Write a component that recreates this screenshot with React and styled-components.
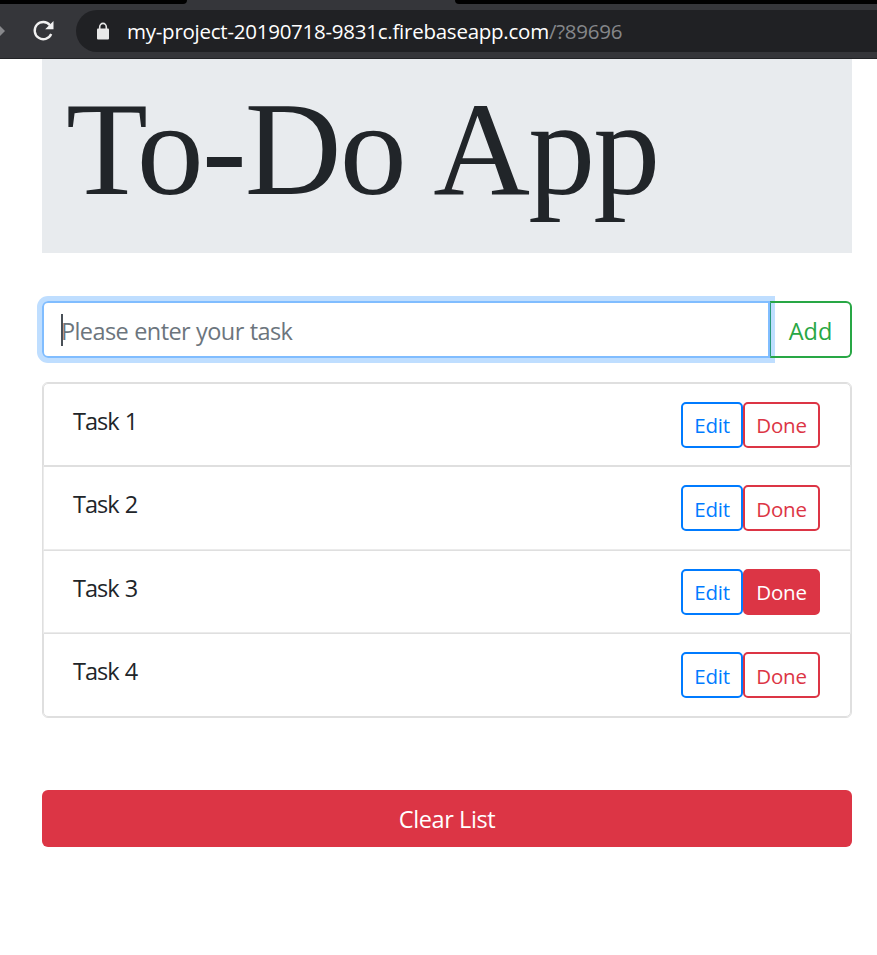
import React from "react";
import styled, { createGlobalStyle, css } from "styled-components";

const Global = createGlobalStyle`
  *, *::before, *::after { box-sizing: border-box; }
  body {
    margin: 0;
    background: #fff;
    color: #212529;
    font-family: "Open Sans", "Noto Sans", sans-serif;
    overflow: hidden;
  }
`;

const Chrome = styled.header`
  height: 59px;
  background: #35363a;
  border-bottom: 1px solid #222326;
  display: flex;
  flex-direction: column;
`;

const TabStrip = styled.div`
  height: 10px;
  flex: none;
  display: flex;
  justify-content: space-between;
`;

const TabGap = styled.div`
  height: 4px;
  width: ${(p) => p.$width}px;
  background: #000;
  border-radius: ${(p) => (p.$side === "left" ? "0 0 6px 0" : "0 0 0 6px")};
`;

const Toolbar = styled.div`
  display: flex;
  align-items: center;
  height: 42px;
`;

const ForwardIcon = styled.svg`
  width: 6px;
  height: 12px;
  flex: none;
`;

const ReloadIcon = styled.svg`
  width: 22px;
  height: 22px;
  margin: 0 21px 0 26px;
  flex: none;
`;

const AddressBar = styled.div`
  flex: 1;
  height: 42px;
  margin-left: 1px;
  padding-left: 20px;
  background: #202124;
  border-radius: 21px 0 0 21px;
  display: flex;
  align-items: center;
`;

const LockIcon = styled.svg`
  width: 14px;
  height: 18px;
  margin-right: 17px;
`;

const Url = styled.span`
  font-size: 20.5px;
  line-height: 28px;
  letter-spacing: -0.25px;
  color: #fff;
  white-space: nowrap;
`;

const UrlPath = styled.span`
  color: #85878a;
`;

const Page = styled.main`
  width: 810px;
  margin-left: 42px;
`;

const Banner = styled.div`
  height: 194px;
  padding: 14px 24px;
  background: #e8ebee;
`;

const Title = styled.h1`
  margin: 0;
  font-family: "Liberation Serif", "Times New Roman", serif;
  font-size: 134px;
  font-weight: 400;
  line-height: 152px;
  letter-spacing: -1.8px;
  word-spacing: 4px;
  white-space: nowrap;
`;

const TaskForm = styled.div`
  margin-top: 48px;
  height: 57px;
  display: flex;
`;

const TaskField = styled.div`
  width: 728px;
  border: 2px solid #80bdff;
  border-radius: 6px 0 0 6px;
  box-shadow: 0 0 0 5px #bfdeff;
  padding-left: 17px;
  display: flex;
  align-items: center;
`;

const Caret = styled.span`
  width: 2px;
  height: 32px;
  margin-right: -2px;
  background: #495057;
`;

const Placeholder = styled.span`
  padding-top: 2px;
  font-size: 23.5px;
  line-height: 32px;
  letter-spacing: -0.6px;
  word-spacing: 0.6px;
  color: #6c757d;
  white-space: nowrap;
`;

const AddButton = styled.button`
  flex: 1;
  padding: 2px 0 0;
  border: 2px solid #28a745;
  border-left: 1px solid #279a7a;
  border-radius: 0 6px 6px 0;
  background: linear-gradient(to right, #bfdeff 4px, #fff 4px);
  color: #28a745;
  font: 400 23.5px/32px "Open Sans", sans-serif;
`;

const TaskList = styled.ul`
  list-style: none;
  margin: 24px 0 0;
  padding: 0;
  height: 336px;
  border: 1px solid #dfdfdf;
  border-radius: 6px;
  display: grid;
  grid-template-rows: 83px 84px 83px 84px;
`;

const TaskRow = styled.li`
  display: flex;
  justify-content: space-between;
  align-items: flex-start;
  padding: 18px 30px 0 29px;
  border: 1px solid #ebebeb;
  border-top-color: #dfdfdf;
  &:first-child, &:last-child { border-color: #dfdfdf; }
  &:first-child { border-radius: 5px 5px 0 0; }
  &:last-child { border-radius: 0 0 5px 5px; }
`;

const TaskName = styled.span`
  font-size: 23.5px;
  line-height: 38px;
  letter-spacing: -1px;
  word-spacing: 1px;
`;

const Actions = styled.div`
  display: flex;
`;

const ActionButton = styled.button`
  width: ${(p) => p.$width}px;
  height: 46px;
  padding: 0;
  border: 2px solid ${(p) => p.$tone};
  border-radius: 5px;
  background: #fff;
  color: ${(p) => p.$tone};
  font: 400 20.5px/30px "Open Sans", sans-serif;
  letter-spacing: -0.2px;
  ${TaskRow}:nth-child(even) & { padding-top: 2px; }
  ${(p) => p.$filled && css`
    background: ${p.$tone};
    color: #fff;
  `}
`;

const ClearButton = styled.button`
  display: block;
  width: 100%;
  height: 57px;
  margin-top: 72px;
  padding: 1px 0 0;
  border: 0;
  border-radius: 6px;
  background: #dc3545;
  color: #fff;
  font: 400 23.5px/32px "Open Sans", sans-serif;
  letter-spacing: -0.4px;
`;

const tasks = [
  { name: "Task 1" },
  { name: "Task 2" },
  { name: "Task 3", active: true },
  { name: "Task 4" },
];

export default function App() {
  return (
    <>
      <Global />
      <Chrome>
        <TabStrip>
          <TabGap $width={187} $side="left" />
          <TabGap $width={422} $side="right" />
        </TabStrip>
        <Toolbar>
          <ForwardIcon viewBox="0 0 6 12">
            <path d="M0 1 5 6 0 11z" fill="#87888b" />
          </ForwardIcon>
          <ReloadIcon viewBox="0 0 22 22">
            <path d="M18 5.2A8.6 8.6 0 1 0 19.2 14" fill="none" stroke="#f1f1f1" strokeWidth="2.3" />
            <path d="M21.5 1v8.3H13.2z" fill="#f1f1f1" />
          </ReloadIcon>
          <AddressBar>
            <LockIcon viewBox="0 0 14 18">
              <path d="M3.7 8V5a3.3 3.6 0 0 1 6.6 0v3" fill="none" stroke="#e8e8e8" strokeWidth="1.6" />
              <rect x="1" y="6.5" width="12" height="11" rx="1" fill="#e8e8e8" />
            </LockIcon>
            <Url>
              my-project-20190718-9831c.firebaseapp.com<UrlPath>/?89696</UrlPath>
            </Url>
          </AddressBar>
        </Toolbar>
      </Chrome>
      <Page>
        <Banner>
          <Title>To-Do App</Title>
        </Banner>
        <TaskForm>
          <TaskField>
            <Caret />
            <Placeholder>Please enter your task</Placeholder>
          </TaskField>
          <AddButton>Add</AddButton>
        </TaskForm>
        <TaskList>
          {tasks.map((task) => (
            <TaskRow key={task.name}>
              <TaskName>{task.name}</TaskName>
              <Actions>
                <ActionButton $width={62} $tone="#007bff">Edit</ActionButton>
                <ActionButton $width={77} $tone="#dc3545" $filled={task.active}>Done</ActionButton>
              </Actions>
            </TaskRow>
          ))}
        </TaskList>
        <ClearButton>Clear List</ClearButton>
      </Page>
    </>
  );
}
